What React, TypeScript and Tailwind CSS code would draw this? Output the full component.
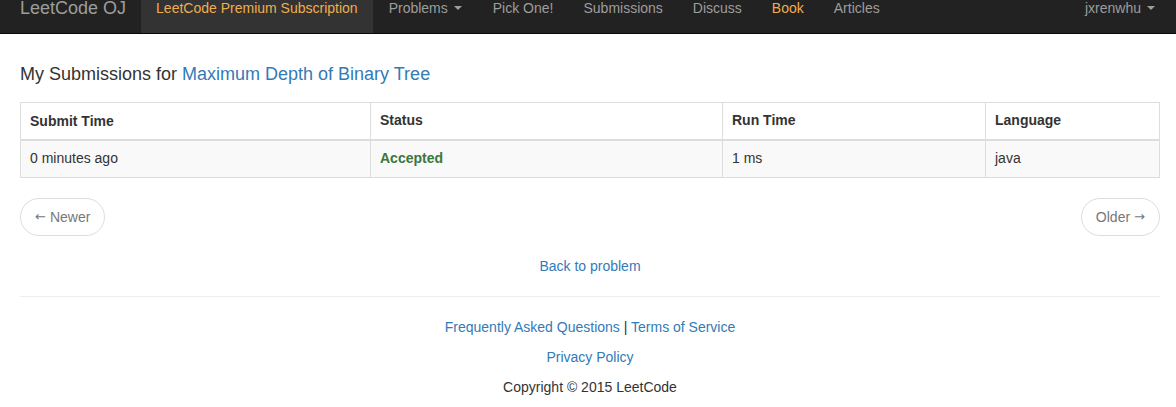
const font = { fontFamily: '"Liberation Sans", Arial, sans-serif' };

function Caret() {
  return (
    <span className="ml-[6px] inline-block h-0 w-0 border-x-[4px] border-t-[4px] border-x-transparent border-t-current align-middle" />
  );
}

export default function App() {
  const links = ["Pick One!", "Submissions", "Discuss"];
  return (
    <div className="h-[407px] overflow-hidden bg-white text-[14px] text-[#333]" style={font}>
      {/* navbar, scrolled up so its top is cut off */}
      <nav className="-mt-[17px] flex h-[51px] border-b border-[#080808] bg-[#222] text-[#9d9d9d]">
        <div className="flex w-full items-stretch pl-[20px] pr-[16px]">
          <span className="flex items-center pr-[15px] text-[18px]">LeetCode OJ</span>
          <span className="flex items-center bg-[#333] px-[15px] text-[#f0ad4e]">
            LeetCode Premium Subscription
          </span>
          <span className="flex items-center px-[16px]">
            Problems
            <Caret />
          </span>
          {links.map((l) => (
            <span key={l} className="flex items-center px-[15px]">
              {l}
            </span>
          ))}
          <span className="flex items-center px-[15px] text-[#f0ad4e]">Book</span>
          <span className="flex items-center px-[15px]">Articles</span>
          <span className="ml-auto flex items-center pr-[5px]">
            jxrenwhu
            <Caret />
          </span>
        </div>
      </nav>

      <div className="pl-[20px] pr-[16px]">
        <h4 className="mt-[30px] mb-[18px] text-[18px] leading-[20px]">
          My Submissions for <a className="text-[#337ab7]">Maximum Depth of Binary Tree</a>
        </h4>

        <table className="w-full border-collapse border border-[#ddd]">
          <thead>
            <tr className="text-left font-bold">
              <th className="h-[37px] w-[350px] border border-b-2 border-[#ddd] px-[9px] leading-[20px]">Submit Time</th>
              <th className="w-[352px] border border-b-2 border-[#ddd] px-[9px]">Status</th>
              <th className="w-[263px] border border-b-2 border-[#ddd] px-[9px]">Run Time</th>
              <th className="border border-b-2 border-[#ddd] px-[9px]">Language</th>
            </tr>
          </thead>
          <tbody>
            <tr className="bg-[#f9f9f9]">
              <td className="h-[38px] border border-[#ddd] px-[9px]">0 minutes ago</td>
              <td className="border border-[#ddd] px-[9px] font-bold text-[#3c763d]">Accepted</td>
              <td className="border border-[#ddd] px-[9px]">1 ms</td>
              <td className="border border-[#ddd] px-[9px]">java</td>
            </tr>
          </tbody>
        </table>

        <div className="mt-[20px] flex justify-between text-[#777]">
          <span className="flex h-[38px] items-center rounded-full border border-[#ddd] px-[14px]">
            <span className="mr-[4px]" style={{ fontFamily: '"DejaVu Sans", sans-serif', fontSize: "13px" }}>←</span>Newer
          </span>
          <span className="flex h-[38px] items-center rounded-full border border-[#ddd] px-[14px]">
            Older<span className="ml-[4px]" style={{ fontFamily: '"DejaVu Sans", sans-serif', fontSize: "13px" }}>→</span>
          </span>
        </div>

        <div className="mt-[20px] text-center leading-[20px] text-[#337ab7]">Back to problem</div>

        <hr className="mt-[20px] border-t border-[#eee]" />

        <div className="mt-[20px] flex flex-col items-center gap-[10px] leading-[20px]">
          <div>
            <a className="text-[#337ab7]">Frequently Asked Questions</a> |{" "}
            <a className="text-[#337ab7]">Terms of Service</a>
          </div>
          <a className="text-[#337ab7]">Privacy Policy</a>
          <div>Copyright © 2015 LeetCode</div>
        </div>
      </div>
    </div>
  );
}
